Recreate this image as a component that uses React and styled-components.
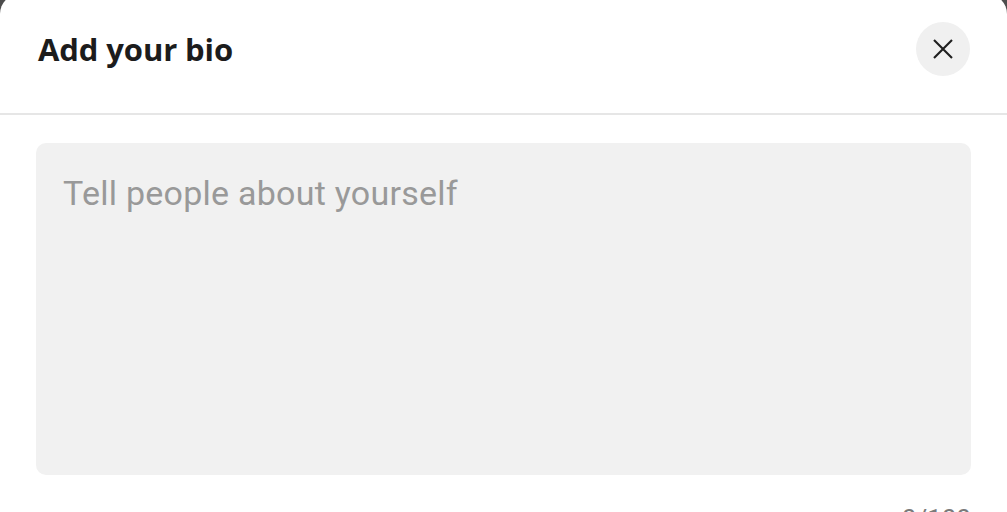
import React, { useState } from 'react'
import styled, { createGlobalStyle } from 'styled-components'

const Global = createGlobalStyle`
  html, body {
    margin: 0;
    padding: 0;
    background: #4d4d4d;
    overflow: hidden;
  }
`

const Sheet = styled.div`
  margin-top: -6px;
  height: 560px;
  background: #fff;
  border-radius: 20px;
  display: flex;
  flex-direction: column;
`

const Header = styled.div`
  display: flex;
  align-items: center;
  justify-content: space-between;
  height: 121px;
  padding: 0 37px 9px 38px;
  border-bottom: 2px solid #e6e6e6;
  box-sizing: border-box;
`

const Title = styled.h1`
  margin: 0;
  font-family: "Open Sans", "Noto Sans", sans-serif;
  font-weight: 700;
  font-size: 31px;
  color: #1c1c1c;
  letter-spacing: -0.1px;
`

const CloseButton = styled.button`
  width: 54px;
  height: 54px;
  border-radius: 50%;
  border: none;
  background: #f0f0f0;
  display: flex;
  align-items: center;
  justify-content: center;
  padding: 0;
  cursor: pointer;
`

const Body = styled.div`
  padding: 28px 36px 0;
  display: flex;
  flex-direction: column;
`

const Field = styled.textarea`
  height: 332px;
  box-sizing: border-box;
  border: none;
  border-radius: 10px;
  background: #f1f1f1;
  padding: 30px 27px;
  resize: none;
  outline: none;
  font-family: Roboto, "Liberation Sans", sans-serif;
  font-size: 34px;
  letter-spacing: 0.25px;
  color: #222;
  &::placeholder {
    color: #999999;
  }
`

const Counter = styled.div`
  align-self: flex-end;
  margin-top: 29px;
  font-family: Roboto, "Liberation Sans", sans-serif;
  font-size: 26px;
  color: #7a7a7a;
`

const CloseIcon = () => (
  <svg width="22" height="22" viewBox="0 0 24 24" fill="none" stroke="#1f1f1f" strokeWidth="2.3" strokeLinecap="square">
    <path d="M3 3L21 21M21 3L3 21" />
  </svg>
)

export default function App() {
  const [bio, setBio] = useState('')
  return (
    <>
      <Global />
      <Sheet>
        <Header>
          <Title>Add your bio</Title>
          <CloseButton aria-label="Close">
            <CloseIcon />
          </CloseButton>
        </Header>
        <Body>
          <Field
            placeholder="Tell people about yourself"
            value={bio}
            maxLength={100}
            onChange={e => setBio(e.target.value)}
          />
          <Counter>{bio.length}/100</Counter>
        </Body>
      </Sheet>
    </>
  )
}
